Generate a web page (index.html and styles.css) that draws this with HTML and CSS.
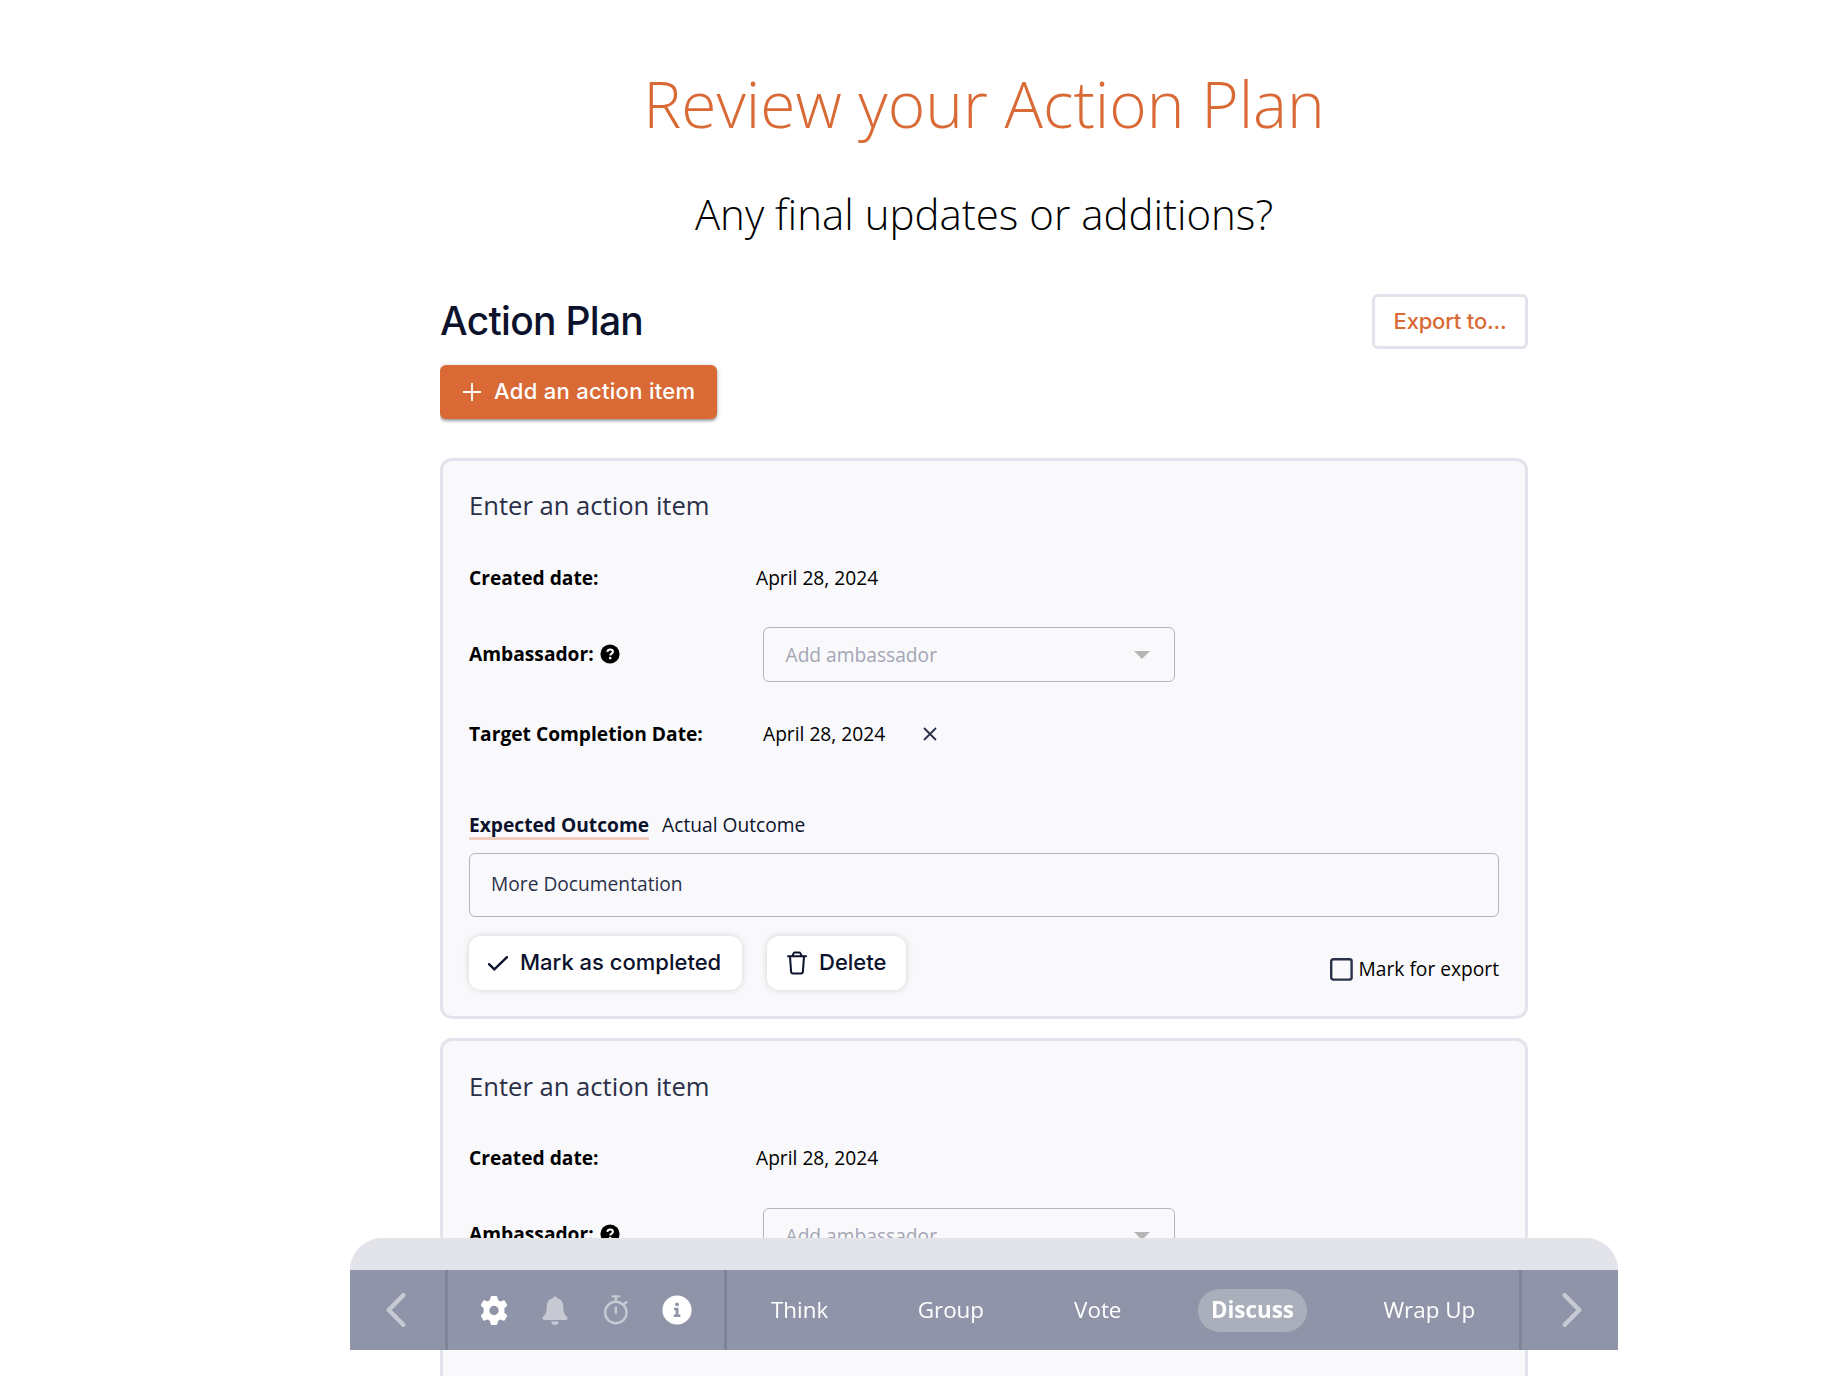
FILE: index.html
```html
<!DOCTYPE html>
<html lang="en">
<head>
<meta charset="utf-8">
<title>Action Plan</title>
<link rel="stylesheet" href="styles.css">
</head>
<body>
<main class="page">
  <h1 class="title"><span>Review your Action Plan</span></h1>
  <p class="subtitle"><span>Any final updates or additions?</span></p>
  <header class="plan-header">
    <h2 class="plan-title"><span>Action Plan</span></h2>
    <button class="export-btn"><span>Export to...</span></button>
  </header>
  <button class="add-btn">
    <svg width="18" height="18" viewBox="0 0 18 18"><path d="M9 0V18M0 9H18" stroke="#fff" stroke-width="1.8" fill="none"/></svg>
    <span>Add an action item</span>
  </button>

  <section class="card">
    <h3 class="item-title"><span>Enter an action item</span></h3>
    <div class="row row-created"><b class="label"><span>Created date:</span></b><span class="created">April 28, 2024</span></div>
    <div class="row row-ambassador">
      <b class="label"><span>Ambassador:</span>
        <svg class="help" width="20" height="20" viewBox="0 0 20 20"><circle cx="10" cy="10" r="9.6"/><path d="M7.3 7.9C7.5 6.2 8.7 5.4 10.1 5.4c1.6 0 2.8.9 2.8 2.3 0 1.9-2.6 2-2.6 3.8" fill="none" stroke="#fff" stroke-width="2"/><circle cx="10.2" cy="14.1" r="1.3" fill="#fff"/></svg>
      </b>
      <div class="select"><span>Add ambassador</span><svg width="16" height="8" viewBox="0 0 16 8"><path d="M0 0H16L8 8Z" fill="#b5b5b5"/></svg></div>
    </div>
    <div class="row row-target"><b class="label"><span>Target Completion Date:</span></b><span>April 28, 2024</span>
      <svg class="clear" width="14" height="14" viewBox="0 0 14 14"><path d="M1 1L13 13M13 1L1 13" stroke="#2b3049" stroke-width="1.8" fill="none"/></svg>
    </div>
    <div class="tabs"><span class="tab active">Expected Outcome</span><span class="tab">Actual Outcome</span></div>
    <div class="outcome"><span>More Documentation</span></div>
    <div class="actions">
      <button class="soft-btn done"><svg width="20" height="15" viewBox="0 0 20 15"><path d="M1 8.2L6.3 13.3L19 1.2" stroke="#0c122c" stroke-width="2.4" fill="none" stroke-linecap="round"/></svg><span>Mark as completed</span></button>
      <button class="soft-btn delete"><svg width="20" height="24" viewBox="0 0 20 24"><path d="M1 5.3H19M5.3 4.9L6.6 2.4Q7 1.6 7.8 1.6H12.2Q13 1.6 13.4 2.4L14.7 4.9M3 5.6L4.1 20.6Q4.3 22.5 6 22.5H14Q15.7 22.5 15.9 20.6L17 5.6" stroke="#0c122c" stroke-width="2" fill="none" stroke-linecap="round"/></svg><span>Delete</span></button>
      <label class="mark"><svg width="23" height="23" viewBox="0 0 23 23"><rect x="1.2" y="1.2" width="20.4" height="20.4" rx="2" fill="none" stroke="#2b3049" stroke-width="2.4"/></svg><span>Mark for export</span></label>
    </div>
  </section>

  <section class="card">
    <h3 class="item-title"><span>Enter an action item</span></h3>
    <div class="row row-created"><b class="label"><span>Created date:</span></b><span class="created">April 28, 2024</span></div>
    <div class="row row-ambassador">
      <b class="label"><span>Ambassador:</span>
        <svg class="help" width="20" height="20" viewBox="0 0 20 20"><circle cx="10" cy="10" r="9.6"/><path d="M7.3 7.9C7.5 6.2 8.7 5.4 10.1 5.4c1.6 0 2.8.9 2.8 2.3 0 1.9-2.6 2-2.6 3.8" fill="none" stroke="#fff" stroke-width="2"/><circle cx="10.2" cy="14.1" r="1.3" fill="#fff"/></svg>
      </b>
      <div class="select"><span>Add ambassador</span><svg width="16" height="8" viewBox="0 0 16 8"><path d="M0 0H16L8 8Z" fill="#b5b5b5"/></svg></div>
    </div>
  </section>
</main>

<footer class="dock">
  <div class="dock-lip"></div>
  <nav class="dock-bar">
    <div class="arrow prev"><svg width="20" height="34" viewBox="0 0 20 34"><path d="M17.3 2.3L2.7 17L17.3 31.7" fill="none" stroke="#c7c9d3" stroke-width="4.4" stroke-linecap="round" stroke-linejoin="round"/></svg></div>
    <div class="tools">
      <svg width="28" height="29" viewBox="0 0 28 29"><path fill="#fff" fill-rule="evenodd" d="M10.6 1.1Q10.8 0 12 0H16Q17.2 0 17.4 1.1L18 4.1L20.3 5.4L23.2 4.4Q24.3 4.1 24.9 5L26.9 8.5Q27.5 9.5 26.6 10.3L24.4 12.3V16.7L26.6 18.7Q27.5 19.5 26.9 20.5L24.9 24Q24.3 24.9 23.2 24.6L20.3 23.6L18 24.9L17.4 27.9Q17.2 29 16 29H12Q10.8 29 10.6 27.9L10 24.9L7.7 23.6L4.8 24.6Q3.7 24.9 3.1 24L1.1 20.5Q.5 19.5 1.4 18.7L3.6 16.7V12.3L1.4 10.3Q.5 9.5 1.1 8.5L3.1 5Q3.7 4.1 4.8 4.4L7.7 5.4L10 4.1ZM14 9.8A4.7 4.7 0 1 0 14 19.2A4.7 4.7 0 1 0 14 9.8Z"/></svg>
      <svg width="26" height="29" viewBox="0 0 26 29"><path fill="#c7c9d3" d="M11.2 2Q11.2 .2 13 .2Q14.8 .2 14.8 2C18.8 2.8 21.2 6 21.2 10C21.2 16 22.3 18.3 25 20.9C26.2 22.3 25.5 24 23.8 24H2.2C.5 24-.2 22.3 1 20.9C3.7 18.3 4.8 16 4.8 10C4.8 6 7.2 2.8 11.2 2ZM9.2 25.5H16.8Q16.4 29 13 29Q9.6 29 9.2 25.5Z"/></svg>
      <svg width="26" height="30" viewBox="0 0 26 30"><g fill="none" stroke="#c7c9d3" stroke-width="2.4" stroke-linecap="round"><circle cx="13.8" cy="17.5" r="10.7"/><path d="M10.8 1.4H17M13.9 1.6V6M13.9 12.5V18M21.7 9.2L24.4 7.2"/></g></svg>
      <svg width="30" height="30" viewBox="0 0 30 30"><circle cx="15" cy="15" r="14.6" fill="#fff"/><g fill="#9094a8"><circle cx="15" cy="9.3" r="1.9"/><path d="M12 12.8H16.5V19.5H18.3V22H11.8V19.5H13.6V15.2H12Z"/></g></svg>
    </div>
    <div class="stages">
      <span class="stage s1">Think</span><span class="stage s2">Group</span><span class="stage s3">Vote</span><span class="stage current">Discuss</span><span class="stage s5">Wrap Up</span>
    </div>
    <div class="arrow next"><svg width="20" height="34" viewBox="0 0 20 34"><path d="M2.7 2.3L17.3 17L2.7 31.7" fill="none" stroke="#c7c9d3" stroke-width="4.4" stroke-linecap="round" stroke-linejoin="round"/></svg></div>
  </nav>
</footer>
</body>
</html>
```
FILE: styles.css
```css
* { box-sizing: border-box; }
body {
  margin: 0;
  height: 1376px;
  overflow: hidden;
  background: #fff;
  color: #000;
  font: 19.2px/26px "Open Sans", sans-serif;
  white-space: nowrap;
}
h1, h2, h3, p { margin: 0; font-weight: 400; }
svg { flex: none; display: block; }
button { border: 0; margin: 0; padding: 0; display: flex; align-items: center; font: 500 22px/30px Inter, sans-serif; }

.page { width: 1088px; height: 1376px; overflow: hidden; margin-left: 440px; display: flex; flex-direction: column; }
.page > * { flex: none; }
.title { margin-top: 59px; height: 90px; line-height: 90px; font-size: 64px; font-weight: 300; text-align: center; color: #d96a35; }
.subtitle { margin-top: 36px; height: 58px; line-height: 58px; font-size: 42px; font-weight: 300; text-align: center; }
.plan-header { margin-top: 51px; height: 55px; display: flex; justify-content: space-between; align-items: center; }
.plan-title { padding-bottom: 2px; font: 500 39px/53px Inter, sans-serif; color: #0c122c; letter-spacing: -0.7px; }
.export-btn { width: 156px; height: 55px; padding-bottom: 1px; justify-content: center; border: 3px solid #e1e4eb; border-radius: 6px; background: #fff; color: #d96a35; letter-spacing: -0.2px; }
.add-btn { margin-top: 16px; width: 277px; height: 54px; padding-left: 23px; gap: 13px; border-radius: 6px; background: #d96a35; color: #fff; letter-spacing: 0.3px; box-shadow: 0 2px 3px rgba(0,0,0,.35), 0 0 6px rgba(0,0,0,.12); }
.add-btn span { margin-top: -2px; }

.card { height: 561px; padding: 24px 26px 0; border: 3px solid #e2e4eb; border-radius: 12px; background: #f9f9fc; }
.add-btn + .card { margin-top: 39px; }
.card + .card { margin-top: 19px; padding-top: 25px; }
.item-title { height: 40px; line-height: 42px; font-size: 25.6px; color: #2b3049; }
.row { display: flex; align-items: center; }
.label { width: 294px; display: flex; align-items: center; gap: 6px; font-weight: 700; }
.row-created { margin-top: 40px; height: 26px; }
.card + .card .row-created { margin-top: 39px; }
.row-created .label { width: 287px; }
.row-ambassador { margin-top: 36px; height: 55px; }
.card + .card .row-ambassador { margin-top: 37px; }
.row-ambassador .label { padding-bottom: 2px; }
.card + .card .row-ambassador .label { padding-bottom: 3px; }
.select { width: 412px; height: 55px; padding: 0 24px 0 21.5px; display: flex; align-items: center; justify-content: space-between; border: 1px solid #b5b6ba; border-radius: 6px; color: #a3a5b5; }
.row-target { margin-top: 39px; height: 26px; }
.clear { margin-left: 38px; }
.tabs { margin-top: 65px; height: 28px; display: flex; gap: 13px; color: #0c122c; }
.tab { height: 28px; line-height: 26px; }
.tab.active { font-weight: 700; border-bottom: 3px solid #f1cdbf; }
.outcome { margin-top: 13px; height: 64px; padding: 0 0 2px 21px; display: flex; align-items: center; border: 1px solid #b5b6ba; border-radius: 6px; color: #2b3049; }
.actions { margin-top: 19px; display: flex; align-items: center; }
.soft-btn { height: 54px; border-radius: 12px; background: #fff; color: #0c122c; box-shadow: 0 0 7px rgba(0,0,0,.15); }
.soft-btn span { margin-top: -2px; }
.done { width: 273px; padding-left: 19px; gap: 12px; }
.delete { width: 139px; margin-left: 25px; padding-left: 20px; gap: 12px; }
.mark { margin-left: auto; margin-top: 12px; display: flex; align-items: center; gap: 6px; }

.dock { position: fixed; left: 350px; top: 1238px; width: 1268px; }
.dock-lip { height: 32px; border-radius: 32px 32px 0 0; background: #e3e4e9; }
.dock-bar { height: 80px; display: flex; background: #9094a8; }
.arrow { width: 98px; display: flex; align-items: center; justify-content: center; border: 0 solid #7f8499; }
.arrow.prev { border-right-width: 3px; padding-right: 4px; }
.arrow.next { width: 99px; border-left-width: 3px; padding-left: 4px; }
.tools { width: 279px; display: flex; align-items: center; border-right: 3px solid #7f8499; padding: 0 0 0 32px; gap: 34px; }
.stages { flex: 1; display: flex; align-items: center; color: #fff; font-size: 22.4px; }
.stage { height: 43px; line-height: 42px; }
.s1 { margin-left: 44px; }
.s2 { margin-left: 89.5px; }
.s3 { margin-left: 90px; }
.current { margin-left: 76.5px; width: 109px; text-align: center; border-radius: 22px; background: #a9afbb; font-weight: 700; }
.s5 { margin-left: 76.5px; }
```
